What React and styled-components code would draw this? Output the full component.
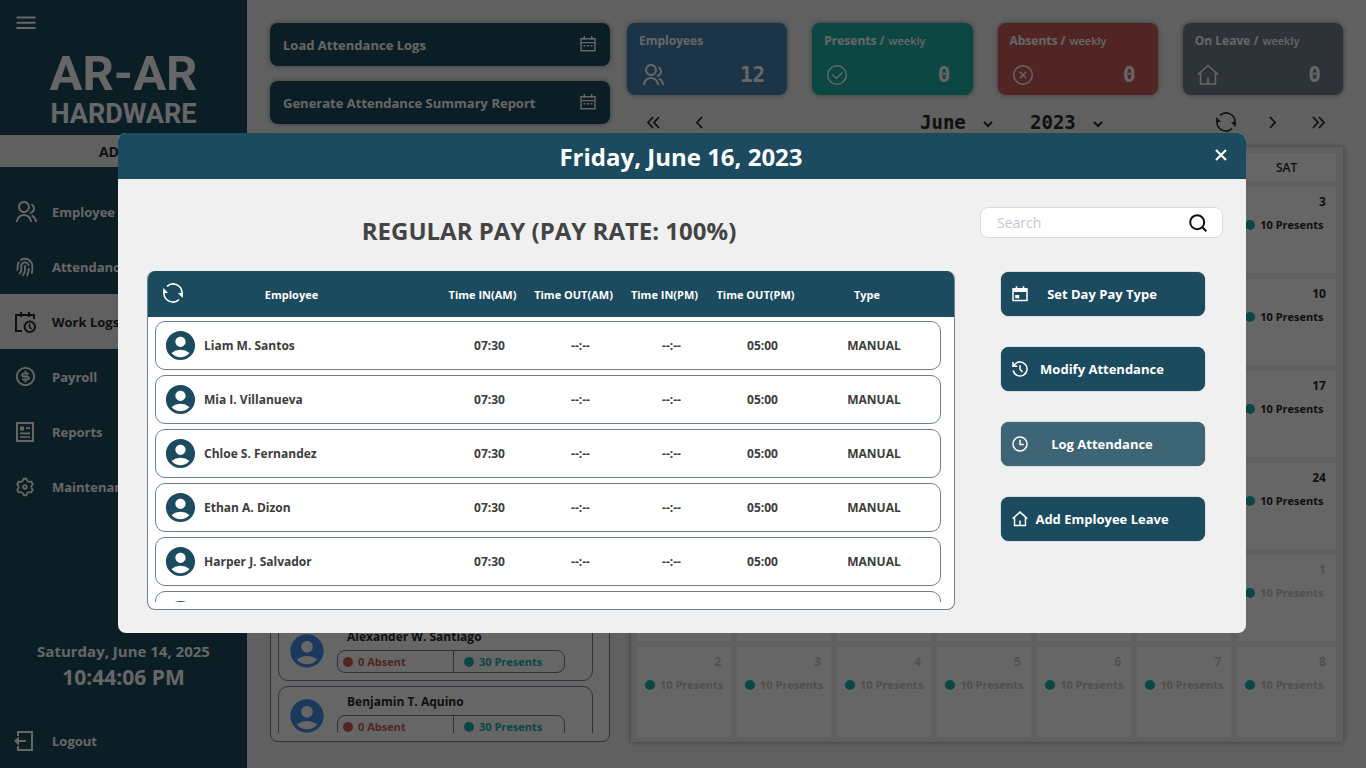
import React from "react";
import styled, { createGlobalStyle, css } from "styled-components";
import {
  RiGroupLine,
  RiFingerprintLine,
  RiMoneyDollarCircleLine,
  RiSettings3Line,
} from "react-icons/ri";
import { MdAccountCircle } from "react-icons/md";

const color = {
  brand: "#1c4a5e",
  brandHover: "#3e6576",
  surface: "#f0f0f0",
  line: "#708090",
  blue: "#4682b4",
  teal: "#20b2aa",
  red: "#cd5c5c",
  ink: "#2a2a2a",
  text: "#3c3c3c",
  muted: "#c8c8c8",
};

const mono = `"DejaVu Sans Mono", "Liberation Mono", monospace`;

const GlobalStyle = createGlobalStyle`
  *, *::before, *::after { box-sizing: border-box; }
  html, body { height: 100%; }
  body {
    margin: 0;
    overflow: hidden;
    background: ${color.surface};
    color: ${color.ink};
    font-family: "Open Sans", "Noto Sans", sans-serif;
    font-size: 12px;
    font-weight: 660;
    line-height: 16px;
  }
  button, input, select { font: inherit; color: inherit; }
  button { padding: 0; border: 0; background: none; cursor: pointer; }
  svg { display: block; flex: none; }
  a { color: inherit; text-decoration: none; }
  h1, h2, p, ul { margin: 0; padding: 0; }
  ul { list-style: none; }
`;

/* ---------- icons ---------- */

const Icon = ({ size = 20, box = 20, width = 2, children }) => (
  <svg
    width={size}
    height={size}
    viewBox={`0 0 ${box} ${box}`}
    fill="none"
    stroke="currentColor"
    strokeWidth={width}
    aria-hidden="true"
  >
    {children}
  </svg>
);

const MenuIcon = () => (
  <Icon>
    <path d="M.5 4.500h19M.5 9.700h19M.5 15h19" />
  </Icon>
);

const CalendarClockIcon = () => (
  <Icon size={22} box={22}>
    <path d="M8 20H2V4h18v4M7 1v5M15 1v5" />
    <circle cx="15.8" cy="15.8" r="5.2" />
    <path d="M15.5 12.8v3.2l2 2" strokeWidth="1.6" />
  </Icon>
);

const ReportIcon = () => (
  <Icon size={22} box={22}>
    <rect x="3" y="2" width="16" height="18" />
    <path d="M6 16h10M6 12.3h10M12 7.2h4" strokeWidth="1.7" />
    <rect x="6" y="5.5" width="4" height="4" fill="currentColor" stroke="none" />
  </Icon>
);

const LogoutIcon = () => (
  <Icon size={22} box={22}>
    <path d="M4 6V2h14v18H4v-4M4 11h8" />
    <path d="M0 11l5-4.5v9z" fill="currentColor" stroke="none" />
  </Icon>
);

const CalendarIcon = () => (
  <Icon size={16} box={16} width={1.4}>
    <path d="M1 2.7h14v12H1zM1 6.6h14M4.3 0v4M11.7 0v4" />
    <path d="M3.5 9.8h2M7 9.8h2M10.5 9.8h2" />
  </Icon>
);

const CalendarDayIcon = () => (
  <Icon size={16} box={16} width={1.5}>
    <path d="M1 3h14v11.5H1z" />
    <path d="M1 2h14v4H1zM3.7.3h1.6V3H3.7zM10.7.3h1.6V3h-1.6z" fill="currentColor" stroke="none" />
    <rect x="3.2" y="9" width="4" height="3.3" fill="currentColor" stroke="none" />
  </Icon>
);

const HistoryIcon = () => (
  <Icon size={16} box={16} width={1.5}>
    <path d="M1.800 4.800A7 7 0 1 1 1.200 9.500M1 1v4.300h4.300M8 4.300v4l2.500 2.700" />
  </Icon>
);

const ClockIcon = () => (
  <Icon size={16} box={16} width={1.5}>
    <circle cx="8" cy="8" r="7" />
    <path d="M8 3.8v4.7h3.8" />
  </Icon>
);

const HomeIcon = ({ size = 16 }) => (
  <Icon size={size} box={22} width={size > 16 ? 1.5 : 2}>
    <path d="M1 10.5L11 1.5l10 9M3.5 8.5V20h15V8.5M11 20v-7" />
  </Icon>
);

const CheckCircleIcon = () => (
  <Icon size={22} box={22} width={1.5}>
    <circle cx="11" cy="11" r="9.3" />
    <path d="M6.5 10.5l4 4 6-6.2" />
  </Icon>
);

const CrossCircleIcon = () => (
  <Icon size={22} box={22} width={1.5}>
    <circle cx="11" cy="11" r="9.3" />
    <path d="M7.8 7.8l6.400 6.400M14.2 7.8l-6.400 6.400" />
  </Icon>
);

const RefreshIcon = () => (
  <Icon width={1.6}>
    <path d="M4 3.3A9 9 0 0 1 19 10.5" />
    <path d="M16 16.7A9 9 0 0 1 1 9.5" />
    <path d="M15 10.2l5-.6-.3 5.4zM5 9.8l-5 .6L.3 5z" fill="currentColor" stroke="none" />
  </Icon>
);

const chevrons = {
  first: "M8 4L3 9.500 8 15M14 4L9 9.500l5 5.500",
  prev: "M11 4L6 9.500l5 5.500",
  next: "M7 4l5 5.500L7 15",
  last: "M4 4l5 5.500L4 15M10 4l5 5.500L10 15",
};

const ChevronIcon = ({ kind }) => (
  <Icon size={18} box={18} width={1.8}>
    <path d={chevrons[kind]} />
  </Icon>
);

const CaretIcon = () => (
  <Icon size={10} box={10}>
    <path d="M1 3l4 4 4-4" />
  </Icon>
);

const CloseIcon = () => (
  <Icon size={12} box={12} width={2.2}>
    <path d="M1 1l10 10M11 1L1 11" />
  </Icon>
);

const SearchIcon = () => (
  <Icon size={18} box={18}>
    <circle cx="8.200" cy="8.200" r="7" />
    <path d="M13 13l4.300 4.300" />
  </Icon>
);

/* ---------- shell ---------- */

const Shell = styled.div`
  display: grid;
  grid-template-columns: 247px minmax(0, 1fr);
  height: 100vh;
`;

const Sidebar = styled.aside`
  display: flex;
  flex-direction: column;
  background: ${color.brand};
  color: #ffffff;
`;

const Brand = styled.div`
  display: flex;
  flex-direction: column;
  height: 135px;
  padding: 13px 16px 0;
`;

const MenuButton = styled.button`
  width: 20px;
  height: 20px;
`;

const Logo = styled.div`
  margin-top: 17px;
  text-align: center;
  font-family: Roboto, sans-serif;
  font-size: 49px;
  font-weight: 700;
  line-height: 48px;
`;

const LogoSub = styled.span`
  display: block;
  font-size: 27px;
  line-height: 32px;
`;

const Role = styled.p`
  padding-top: 1px;
  background: ${color.surface};
  color: ${color.ink};
  text-align: center;
  font-size: 14px;
  font-weight: 700;
  line-height: 31px;
`;

const NavList = styled.ul`
  margin-top: 17px;
`;

const NavLink = styled.a`
  display: grid;
  grid-template-columns: 24px 1fr;
  align-items: center;
  justify-items: start;
  gap: 14px;
  height: 55px;
  padding: 0 14px;
  font-size: 13px;
  ${(p) =>
    p.$active &&
    css`
      background: ${color.surface};
      color: ${color.ink};
    `}
`;

const Clock = styled.div`
  margin-top: auto;
  text-align: center;
  font-size: 15px;
  line-height: 20px;
`;

const Time = styled.strong`
  display: block;
  font-size: 21px;
  font-weight: 700;
  line-height: 32px;
`;

const LogoutArea = styled.div`
  margin-top: 20px;
`;

const Main = styled.main`
  display: grid;
  grid-template-columns: 340px minmax(0, 1fr);
  gap: 17px;
  min-height: 0;
  padding: 23px 23px 26px;
`;

const Column = styled.div`
  display: flex;
  flex-direction: column;
  min-height: 0;
`;

const LogButtons = styled.div`
  display: grid;
  gap: 15px;
`;

const LogButton = styled.button`
  display: flex;
  align-items: center;
  justify-content: space-between;
  height: 43px;
  padding: 0 14px 0 13px;
  border-radius: 8px;
  background: ${color.brand};
  color: #ffffff;
  font-size: 13px;
  box-shadow: 0 0 5px rgba(0, 0, 0, 0.4);

  svg {
    margin-bottom: 2px;
  }
`;

/* ---------- employee summary list ---------- */

const SummaryPanel = styled.section`
  flex: 1;
  min-height: 0;
  margin-top: 38px;
  padding: 3px 16px 8px 7px;
  border: 1px solid ${color.line};
  border-radius: 8px;
  background: #ffffff;
`;

const SummaryList = styled.ul`
  display: flex;
  flex-direction: column;
  gap: 5px;
  height: 100%;
  overflow: hidden;
`;

const SummaryCard = styled.li`
  display: flex;
  flex: none;
  align-items: center;
  gap: 10px;
  height: 60px;
  padding: 0 8px;
  border: 1px solid ${color.line};
  border-radius: 10px;
`;

const SummaryAvatar = styled.span`
  color: #4490e8;
`;

const SummaryBody = styled.div`
  display: grid;
  gap: 5px;
`;

const SummaryName = styled.p`
  padding-left: 10px;
  line-height: 16px;
`;

const Pill = styled.div`
  display: grid;
  grid-template-columns: 115px 111px;
  width: 228px;
  height: 23px;
  border: 1px solid ${color.line};
  border-radius: 8px;
`;

const PillPart = styled.span`
  display: flex;
  align-items: center;
  gap: 5px;
  padding-left: ${(p) => (p.$divided ? 10 : 5)}px;
  border-left: ${(p) => (p.$divided ? `1px solid ${color.line}` : "0")};
  color: ${(p) => p.$tone};
  font-size: 11px;
`;

const Dot = styled.i`
  flex: none;
  width: 10px;
  height: 10px;
  border-radius: 50%;
  background: ${(p) => p.$tone};
`;

/* ---------- stat cards ---------- */

const Stats = styled.div`
  display: grid;
  grid-template-columns: repeat(4, minmax(0, 1fr));
  gap: 25px;
`;

const StatCard = styled.section`
  display: flex;
  flex-direction: column;
  justify-content: space-between;
  height: 72px;
  padding: 9px 22px 8px 12px;
  border-radius: 8px;
  background: ${(p) => p.$tone};
  color: #ffffff;
  box-shadow: 0 0 5px rgba(0, 0, 0, 0.4);
`;

const StatTitle = styled.h2`
  display: flex;
  gap: 4px;
  font-size: 12px;
  font-weight: 700;
  line-height: 18px;
  white-space: nowrap;
`;

const StatPeriod = styled.span`
  font-size: 11px;
  font-weight: 600;
`;

const StatBody = styled.div`
  display: flex;
  align-items: center;
  justify-content: space-between;
  padding-left: 2px;
`;

const StatValue = styled.span`
  font-family: ${mono};
  font-size: 21px;
  font-weight: 700;
  line-height: 24px;
`;

/* ---------- calendar ---------- */

const CalendarNav = styled.nav`
  display: grid;
  grid-template-columns: auto 1fr auto;
  align-items: center;
  height: 52px;
  padding: 2px 10px 0 12px;
`;

const NavGroup = styled.div`
  display: flex;
  gap: 16px;
`;

const PeriodGroup = styled.div`
  display: flex;
  justify-content: flex-end;
  gap: 36px;
  padding-right: 107px;
`;

const NavButton = styled.button`
  display: grid;
  place-items: center;
  width: 30px;
  height: 30px;
`;

const Picker = styled.label`
  position: relative;
  width: 74px;

  svg {
    position: absolute;
    right: 1px;
    top: 9px;
    pointer-events: none;
  }
`;

const PickerSelect = styled.select`
  width: 100%;
  height: 24px;
  padding: 0;
  border: 0;
  background: none;
  appearance: none;
  font-family: ${mono};
  font-size: 19px;
  font-weight: 700;
  line-height: 24px;
`;

const CalendarTable = styled.table`
  display: grid;
  flex: 1;
  grid-template-columns: repeat(6, minmax(0, 1fr)) minmax(0, 1.05fr);
  grid-template-rows: 28px repeat(5, minmax(0, 1fr)) minmax(0, 1.05fr);
  gap: 6px;
  margin: 0 0 0 4px;
  padding: 6px 7px 5px 6px;
  background: ${color.surface};
  box-shadow: 0 0 5px rgba(0, 0, 0, 0.4);

  thead,
  tbody,
  tr {
    display: contents;
  }
`;

const DayHead = styled.th`
  padding: 0;
  background: #ffffff;
  font-weight: 600;
  line-height: 29px;
`;

const DayCell = styled.td`
  display: flex;
  flex-direction: column;
  gap: 6px;
  padding: 6px 10px 0 8px;
  background: #ffffff;
  color: ${(p) => (p.$muted ? color.muted : color.ink)};
`;

const DayNumber = styled.span`
  text-align: right;
  font-weight: 700;
  line-height: 18px;
`;

const DayNote = styled.span`
  display: flex;
  align-items: center;
  gap: 5px;
  font-size: 11px;
  white-space: nowrap;
`;

/* ---------- dialog ---------- */

const Overlay = styled.div`
  position: fixed;
  inset: 0;
  display: grid;
  place-items: center;
  padding: 0 2px 2px 0;
  background: rgba(0, 0, 0, 0.6);
`;

const Dialog = styled.section`
  width: min(1128px, 96vw);
  border-radius: 8px;
  overflow: hidden;
  background: ${color.surface};
`;

const DialogHead = styled.header`
  display: grid;
  grid-template-columns: 30px 1fr 30px;
  align-items: center;
  height: 46px;
  padding: 0 10px 0 8px;
  background: ${color.brand};
  color: #ffffff;
`;

const DialogTitle = styled.h1`
  grid-column: 2;
  padding-top: 2px;
  text-align: center;
  font-size: 24px;
  font-weight: 700;
  line-height: 32px;
`;

const CloseButton = styled.button`
  display: grid;
  place-items: center;
  height: 30px;
  padding-bottom: 2px;
`;

const DialogBody = styled.div`
  display: grid;
  grid-template-columns: minmax(0, 1fr) 243px;
  gap: 25px;
  padding: 28px 23px 23px 29px;
`;

const PayTitle = styled.h2`
  height: 64px;
  padding-right: 4px;
  color: #444444;
  text-align: center;
  font-size: 24px;
  font-weight: 700;
  line-height: 48px;
`;

const LogTable = styled.table`
  display: block;
  border: 1px solid ${color.line};
  border-top: 0;
  border-radius: 8px;
  overflow: hidden;
  background: #ffffff;

  thead {
    display: block;
    background: ${color.brand};
    color: #ffffff;
    font-size: 11px;
  }

  tbody {
    display: grid;
    gap: 5px;
    height: 281px;
    margin: 4px 13px 7px 7px;
    overflow: hidden auto;
    scrollbar-width: none;
  }

  th,
  td {
    padding: 0;
    text-align: center;
  }
`;

const logColumns = css`
  display: grid;
  grid-template-columns: minmax(0, 1fr) repeat(4, 91px) 132px;
  align-items: center;
`;

const LogHeadRow = styled.tr`
  ${logColumns}
  height: 46px;
  padding: 2px 21px 0 0;
`;

const EmployeeHead = styled.th`
  display: grid;
  grid-template-columns: 50px 1fr 52px;
  align-items: center;
`;

const RefreshButton = styled.button`
  display: grid;
  place-items: center;
  height: 30px;
  padding-bottom: 4px;
`;

const LogRow = styled.tr`
  ${logColumns}
  height: 49px;
  border: 1px solid ${color.line};
  border-radius: 10px;
  color: ${color.text};
`;

const EmployeeCell = styled.td`
  display: flex;
  align-items: center;
  gap: 6px;
  padding-left: 7px !important;

  svg {
    color: ${color.brand};
  }
`;

const Side = styled.div`
  display: flex;
  flex-direction: column;
  gap: 34px;
`;

const SearchBox = styled.label`
  display: flex;
  align-items: center;
  height: 31px;
  padding: 0 15px 0 16px;
  border: 1px solid #d8dbe0;
  border-radius: 8px;
  background: #ffffff;
  color: #111111;
`;

const SearchInput = styled.input`
  flex: 1;
  min-width: 0;
  padding: 0;
  border: 0;
  outline: 0;
  background: none;
  font-size: 14px;
  font-weight: 400;
  line-height: 20px;

  &::placeholder {
    color: #c4c9d2;
    opacity: 1;
  }
`;

const Actions = styled.div`
  display: grid;
  gap: 31px;
  padding: 0 18px 0 21px;
`;

const ActionButton = styled.button`
  display: grid;
  grid-template-columns: 16px 1fr 18px;
  align-items: center;
  height: 44px;
  padding: 0 11px;
  border-radius: 8px;
  background: ${(p) => (p.$lit ? color.brandHover : color.brand)};
  box-shadow: 0 0 1px ${color.brand};
  color: #ffffff;
  font-size: 13px;
  white-space: nowrap;
`;

/* ---------- data ---------- */

const navItems = [
  { label: "Employee", icon: <RiGroupLine size={24} /> },
  { label: "Attendance", icon: <RiFingerprintLine size={22} /> },
  { label: "Work Logs", icon: <CalendarClockIcon />, active: true },
  { label: "Payroll", icon: <RiMoneyDollarCircleLine size={23} /> },
  { label: "Reports", icon: <ReportIcon /> },
  { label: "Maintenance", icon: <RiSettings3Line size={22} /> },
];

const logs = [
  "Liam M. Santos",
  "Mia I. Villanueva",
  "Chloe S. Fernandez",
  "Ethan A. Dizon",
  "Harper J. Salvador",
  "Benjamin T. Aquino",
];

const summary = [...logs, "Liam M. Santos", "Alexander W. Santiago", "Benjamin T. Aquino"];

const stats = [
  { title: "Employees", value: 12, tone: color.blue, icon: <RiGroupLine size={24} /> },
  { title: "Presents /", period: "weekly", value: 0, tone: color.teal, icon: <CheckCircleIcon /> },
  { title: "Absents /", period: "weekly", value: 0, tone: color.red, icon: <CrossCircleIcon /> },
  { title: "On Leave /", period: "weekly", value: 0, tone: color.line, icon: <HomeIcon size={22} /> },
];

const dayNames = ["SUN", "MON", "TUE", "WED", "THU", "FRI", "SAT"];

const weeks = Array.from({ length: 6 }, (_, w) =>
  Array.from({ length: 7 }, (_, d) => {
    const date = new Date(2023, 4, 28 + w * 7 + d);
    return { day: date.getDate(), muted: date.getMonth() !== 5 };
  })
);

const actions = [
  { label: "Set Day Pay Type", icon: <CalendarDayIcon /> },
  { label: "Modify Attendance", icon: <HistoryIcon /> },
  { label: "Log Attendance", icon: <ClockIcon />, lit: true },
  { label: "Add Employee Leave", icon: <HomeIcon /> },
];

/* ---------- views ---------- */

const SideNav = () => (
  <Sidebar>
    <Brand>
      <MenuButton aria-label="Menu">
        <MenuIcon />
      </MenuButton>
      <Logo>
        AR-AR
        <LogoSub>HARDWARE</LogoSub>
      </Logo>
    </Brand>
    <Role>ADMIN</Role>
    <nav>
      <NavList>
        {navItems.map((item) => (
          <li key={item.label}>
            <NavLink href="#" $active={item.active}>
              {item.icon}
              {item.label}
            </NavLink>
          </li>
        ))}
      </NavList>
    </nav>
    <Clock>
      Saturday, June 14, 2025
      <Time>10:44:06 PM</Time>
    </Clock>
    <LogoutArea>
      <NavLink href="#">
        <LogoutIcon />
        Logout
      </NavLink>
    </LogoutArea>
  </Sidebar>
);

const Summary = () => (
  <SummaryPanel>
    <SummaryList>
      {summary.map((name, i) => (
        <SummaryCard key={i}>
          <SummaryAvatar>
            <MdAccountCircle size={40} />
          </SummaryAvatar>
          <SummaryBody>
            <SummaryName>{name}</SummaryName>
            <Pill>
              <PillPart $tone={color.red}>
                <Dot $tone={color.red} />0 Absent
              </PillPart>
              <PillPart $tone={color.teal} $divided>
                <Dot $tone={color.teal} />
                30 Presents
              </PillPart>
            </Pill>
          </SummaryBody>
        </SummaryCard>
      ))}
    </SummaryList>
  </SummaryPanel>
);

const PeriodPicker = ({ label, value }) => (
  <Picker>
    <PickerSelect aria-label={label} defaultValue={value}>
      <option>{value}</option>
    </PickerSelect>
    <CaretIcon />
  </Picker>
);

const Calendar = () => (
  <>
    <CalendarNav>
      <NavGroup>
        <NavButton aria-label="Previous year">
          <ChevronIcon kind="first" />
        </NavButton>
        <NavButton aria-label="Previous month">
          <ChevronIcon kind="prev" />
        </NavButton>
      </NavGroup>
      <PeriodGroup>
        <PeriodPicker label="Month" value="June" />
        <PeriodPicker label="Year" value="2023" />
      </PeriodGroup>
      <NavGroup>
        <NavButton aria-label="Refresh">
          <RefreshIcon />
        </NavButton>
        <NavButton aria-label="Next month">
          <ChevronIcon kind="next" />
        </NavButton>
        <NavButton aria-label="Next year">
          <ChevronIcon kind="last" />
        </NavButton>
      </NavGroup>
    </CalendarNav>
    <CalendarTable>
      <thead>
        <tr>
          {dayNames.map((name) => (
            <DayHead key={name}>{name}</DayHead>
          ))}
        </tr>
      </thead>
      <tbody>
        {weeks.map((week, w) => (
          <tr key={w}>
            {week.map(({ day, muted }) => (
              <DayCell key={day} $muted={muted}>
                <DayNumber>{day}</DayNumber>
                <DayNote>
                  <Dot $tone={color.teal} />
                  10 Presents
                </DayNote>
              </DayCell>
            ))}
          </tr>
        ))}
      </tbody>
    </CalendarTable>
  </>
);

const DayDialog = () => (
  <Overlay>
    <Dialog role="dialog" aria-modal="true" aria-labelledby="day-title">
      <DialogHead>
        <DialogTitle id="day-title">Friday, June 16, 2023</DialogTitle>
        <CloseButton aria-label="Close">
          <CloseIcon />
        </CloseButton>
      </DialogHead>
      <DialogBody>
        <div>
          <PayTitle>REGULAR PAY (PAY RATE: 100%)</PayTitle>
          <LogTable>
            <thead>
              <LogHeadRow>
                <EmployeeHead>
                  <RefreshButton aria-label="Reload logs">
                    <RefreshIcon />
                  </RefreshButton>
                  Employee
                </EmployeeHead>
                <th>Time IN(AM)</th>
                <th>Time OUT(AM)</th>
                <th>Time IN(PM)</th>
                <th>Time OUT(PM)</th>
                <th>Type</th>
              </LogHeadRow>
            </thead>
            <tbody>
              {logs.map((name) => (
                <LogRow key={name}>
                  <EmployeeCell>
                    <MdAccountCircle size={35} />
                    {name}
                  </EmployeeCell>
                  <td>07:30</td>
                  <td>--:--</td>
                  <td>--:--</td>
                  <td>05:00</td>
                  <td>MANUAL</td>
                </LogRow>
              ))}
            </tbody>
          </LogTable>
        </div>
        <Side>
          <SearchBox>
            <SearchInput type="search" placeholder="Search" aria-label="Search" />
            <SearchIcon />
          </SearchBox>
          <Actions>
            {actions.map((action) => (
              <ActionButton key={action.label} $lit={action.lit}>
                {action.icon}
                <span>{action.label}</span>
              </ActionButton>
            ))}
          </Actions>
        </Side>
      </DialogBody>
    </Dialog>
  </Overlay>
);

export default function App() {
  return (
    <>
      <GlobalStyle />
      <Shell>
        <SideNav />
        <Main>
          <Column>
            <LogButtons>
              <LogButton>
                Load Attendance Logs
                <CalendarIcon />
              </LogButton>
              <LogButton>
                Generate Attendance Summary Report
                <CalendarIcon />
              </LogButton>
            </LogButtons>
            <Summary />
          </Column>
          <Column>
            <Stats>
              {stats.map((stat) => (
                <StatCard key={stat.title} $tone={stat.tone}>
                  <StatTitle>
                    {stat.title} {stat.period && <StatPeriod>{stat.period}</StatPeriod>}
                  </StatTitle>
                  <StatBody>
                    {stat.icon}
                    <StatValue>{stat.value}</StatValue>
                  </StatBody>
                </StatCard>
              ))}
            </Stats>
            <Calendar />
          </Column>
        </Main>
      </Shell>
      <DayDialog />
    </>
  );
}
